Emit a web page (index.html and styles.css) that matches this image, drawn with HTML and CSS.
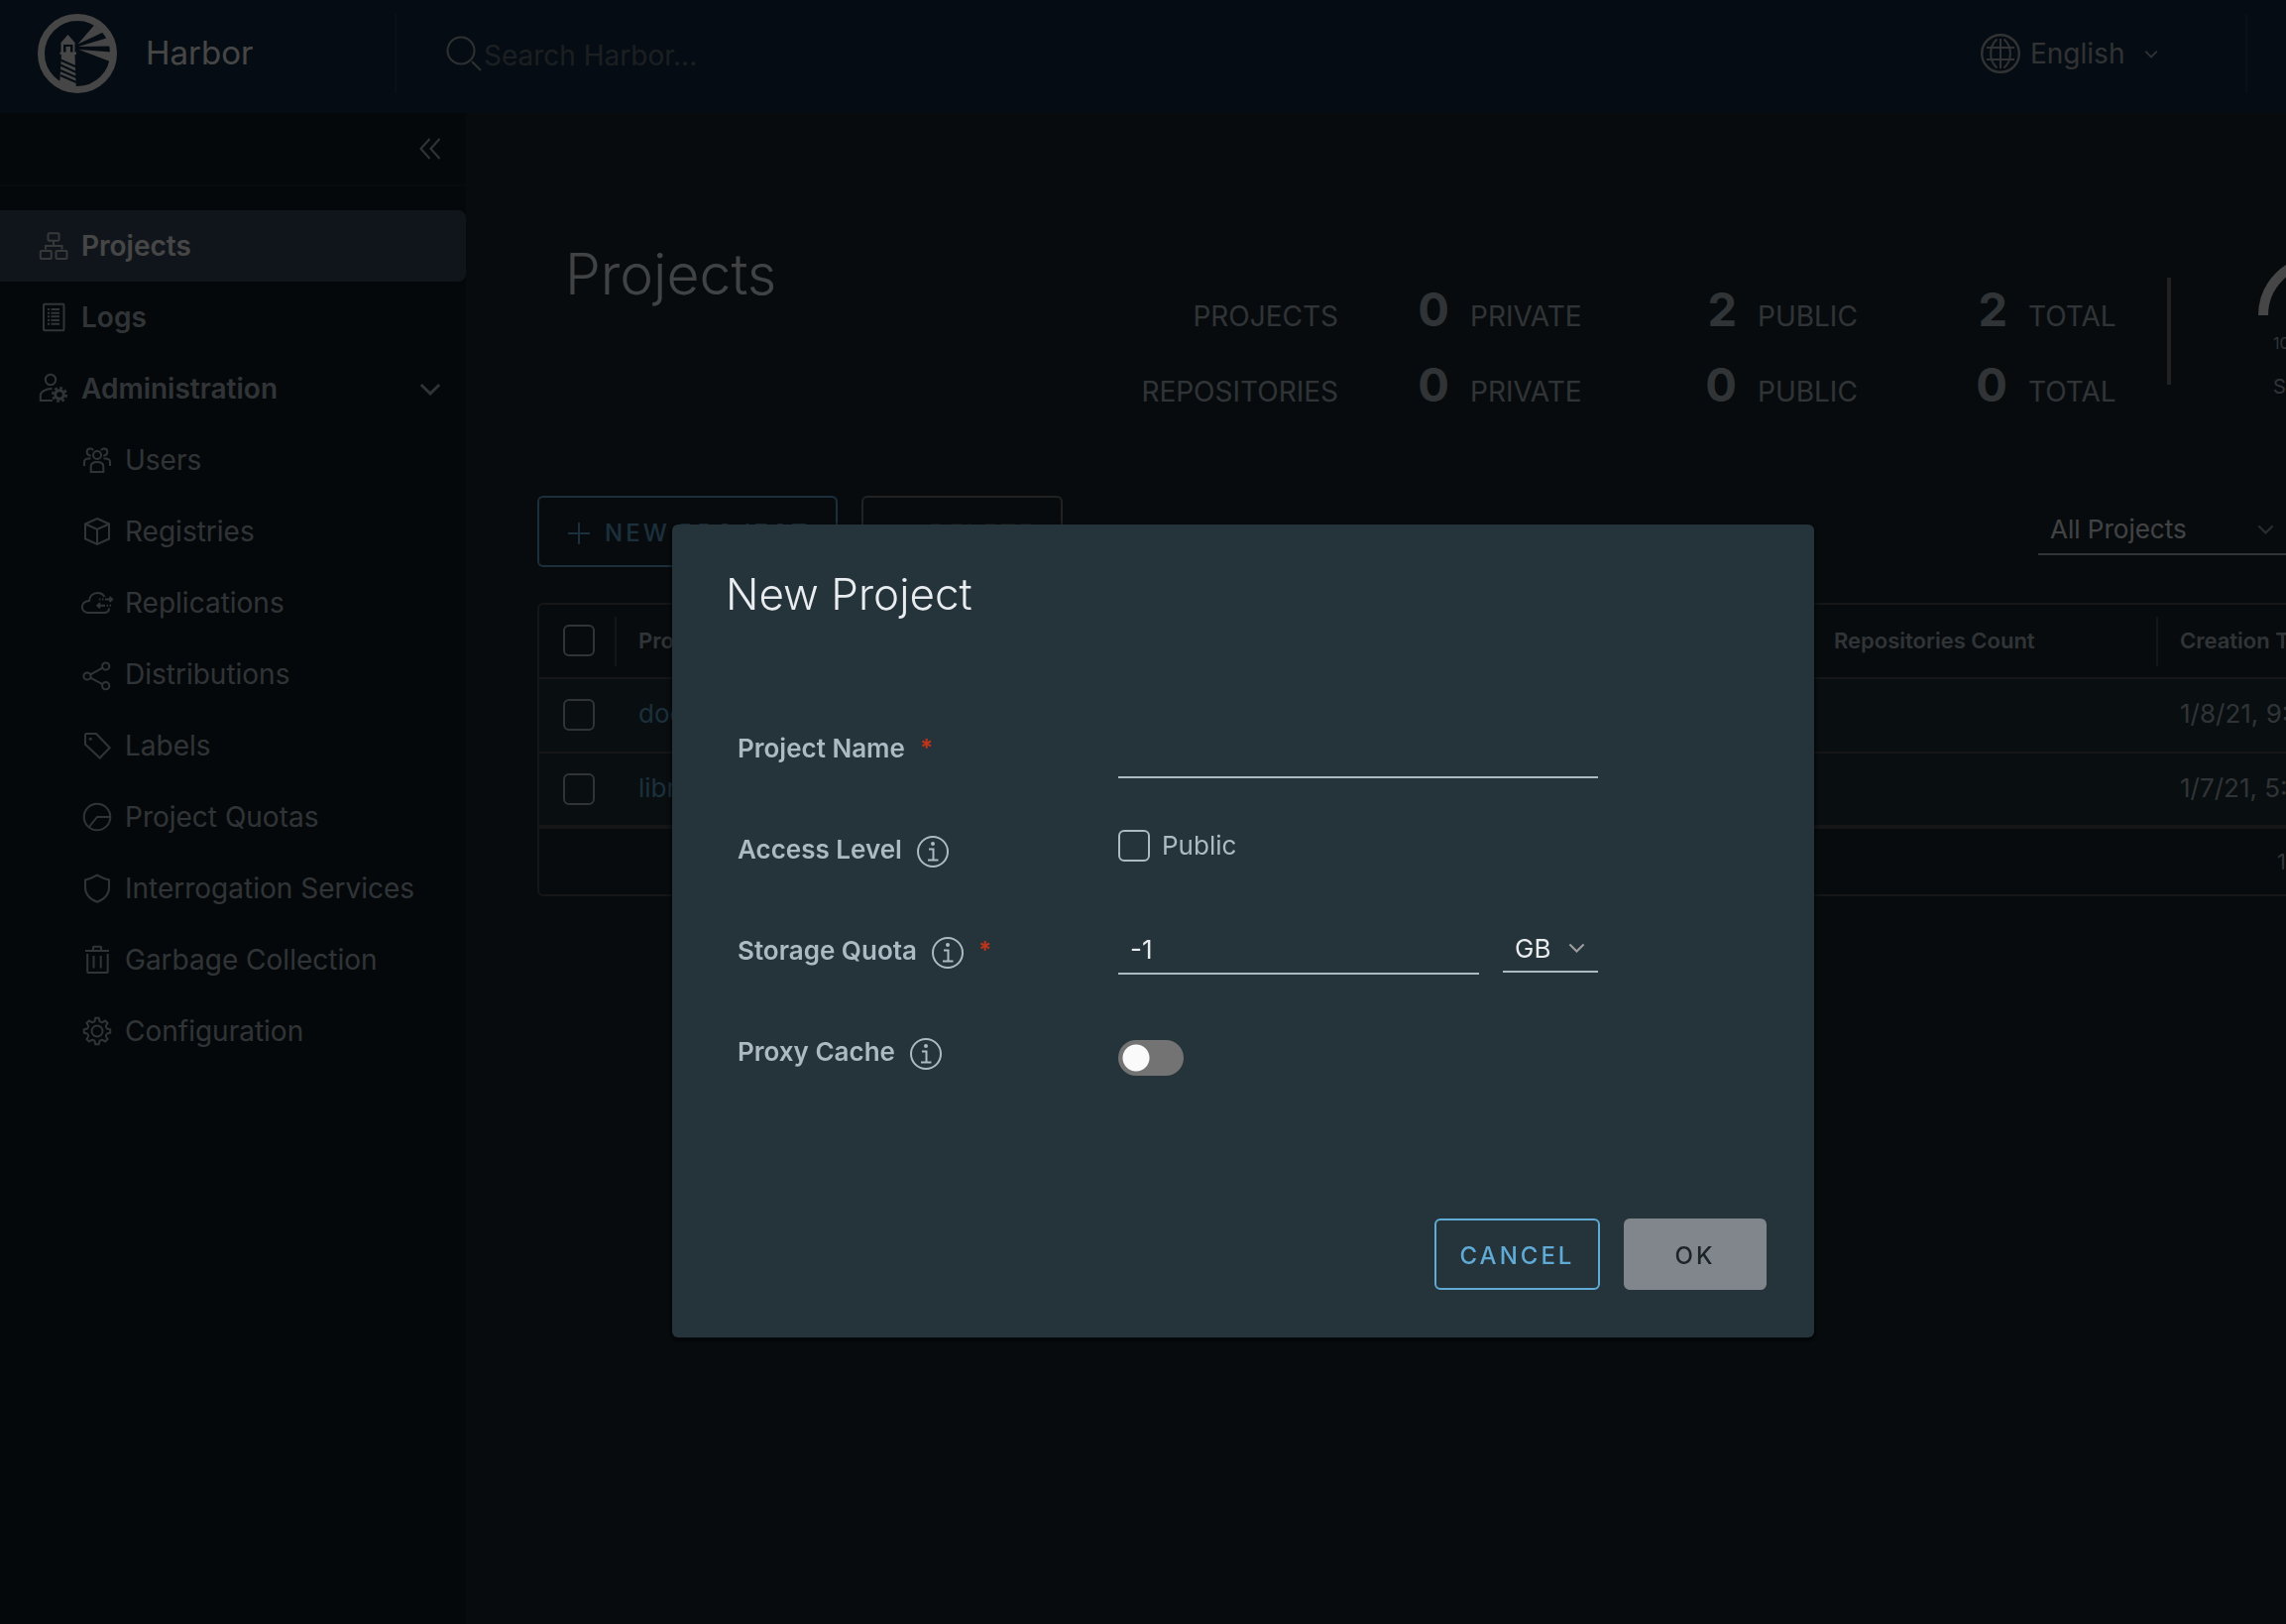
FILE: index.html
```html
<!DOCTYPE html>
<html lang="en">
<head>
<meta charset="utf-8">
<meta name="viewport" content="width=device-width, initial-scale=1">
<title>Harbor</title>
<link rel="stylesheet" href="styles.css">
</head>
<body>
<svg class="defs" aria-hidden="true">
  <symbol id="i-info" viewBox="0 0 32 32"><circle cx="16" cy="16" r="15" stroke-width="2"/><circle cx="16" cy="8" r="2" fill="currentColor" stroke="none"/><path d="M12 13.5h4.500v11M11 24.500h10.500" stroke-width="2"/></symbol>
  <symbol id="i-chevron" viewBox="0 0 24 14"><path d="M2 2l10 10L22 2"/></symbol>
  <path id="cog-tooth" d="M9.050-3.750Q9.600-2.400 11-2.200L13.200-1.700V1.700L11 2.200Q9.600 2.400 9.050 3.750"/>
</svg>

<header class="header">
  <a class="brand" href="#">
    <svg class="brand-logo" viewBox="0 0 80 80" aria-hidden="true">
      <circle cx="40" cy="40" r="36.500" fill="none" stroke="currentColor" stroke-width="7"/>
      <g fill="currentColor">
        <path d="M40.500 30.500L57 11.500 66 18.500zM41 33l28.500-8.500L74 32.500zM41.500 36L74 38.500 73 48z"/>
        <path d="M30.500 21L38 29.500H23zM23.500 29h14v10h-14zM22.500 38.500H39V41H22.500zM24 41h13.500L38.800 76 22 73z"/>
      </g>
      <path class="logo-cut" d="M26 31h9.500v7.500H33V33h-4.500v5.500H26z"/>
      <g class="logo-stripe"><path d="M23 46.500l16 7M23 51.500l16 7.500M23 57l16 7M23 62l16 7"/></g>
    </svg>
    <span class="brand-name">Harbor</span>
  </a>
  <form class="search" role="search">
    <svg class="search-icon" viewBox="0 0 36 36" aria-hidden="true"><circle cx="15" cy="15" r="13.500"/><path d="M26 26l9 9"/></svg>
    <input class="search-input" type="search" aria-label="Search Harbor" placeholder="Search Harbor...">
  </form>
  <button class="language" type="button">
    <svg class="globe" viewBox="0 0 40 40" aria-hidden="true"><circle cx="20" cy="20" r="18.800" stroke-width="2.400"/><path d="M20 5v30M6 14h28M6 26h28M16.500 5.500C8 13 8 27 16.500 34.500M23.500 5.500C32 13 32 27 23.500 34.500"/></svg>
    <span>English</span>
    <svg class="chevron chevron-xs" aria-hidden="true"><use href="#i-chevron"/></svg>
  </button>
</header>

<div class="layout">
  <nav class="sidebar" aria-label="Main">
    <div class="sidebar-top">
      <button class="collapse" type="button" aria-label="Collapse menu"><svg viewBox="0 0 22 22"><path d="M10.500 1l-9 10 9 10M20.500 1l-9 10 9 10"/></svg></button>
    </div>
    <ul class="nav">
      <li><a class="nav-link active" href="#"><svg viewBox="0 0 28 28"><rect x="8.500" y="1.300" width="11" height="7.500" rx="1"/><rect x=".8" y="19" width="11" height="8" rx="1"/><rect x="16.500" y="19" width="11" height="8" rx="1"/><path d="M14 9v5M6 17.500V14h16.500v3.500"/></svg>Projects</a></li>
      <li><a class="nav-link" href="#"><svg viewBox="0 0 28 28"><rect x="4" y=".8" width="20.500" height="26.500" rx="1"/><path d="M8 6h2M11.500 6H20M8 9.700h2M11.500 9.700H20M8 13.300h2M11.500 13.300H20M8 17h2M11.500 17H20M8 20.700h2M11.500 20.700H20"/></svg>Logs</a></li>
      <li>
        <a class="nav-link" href="#"><svg viewBox="0 0 28 28"><circle cx="11" cy="5" r="5.200"/><path d="M12.500 14C6 14 .8 17.500.8 20.500V26H13"/><circle cx="20" cy="20" r="4.300" stroke-width="3"/><circle cx="20" cy="20" r="6.800" stroke-width="2.500" stroke-dasharray="2.900 2.440"/></svg>Administration<svg class="chevron chevron-nav" aria-hidden="true"><use href="#i-chevron"/></svg></a>
        <ul class="nav nav-sub">
          <li><a class="nav-link" href="#"><svg viewBox="0 0 28 28"><circle cx="14" cy="9" r="4"/><path d="M7.700 26V20.500c0-3 2.500-4.500 6.300-4.500s6.300 1.500 6.300 4.500V26zM10 4.200C8.500 1.500 4 2 3.700 5.500c-.2 2.500 1.800 4.300 4 4M18 4.200c1.500-2.700 6-2.200 6.300 1.300.2 2.500-1.800 4.300-4 4M7.500 12.500C3 12 1 13.500 1 16v4M20.500 12.500C25 12 27 13.500 27 16v4"/></svg>Users</a></li>
          <li><a class="nav-link" href="#"><svg viewBox="0 0 28 28"><path d="M14 1l12 5.500v15L14 27 2 21.500v-15zM2 6.500L14 12l12-5.500M14 12v15"/></svg>Registries</a></li>
          <li><a class="nav-link" href="#"><svg viewBox="0 0 28 28"><path d="M21.500 8C20 5.500 17.500 4 14.500 4 9.500 4 6.500 7.500 6 12c-4 0-7.200 2.700-7.200 6.200C-1.200 22 2 24 5 24h15.500c3.500 0 5.500-1.500 5.500-4.500M22 10.500h7M26.500 8l2.700 2.500-2.700 2.500M16 10.500h1.500M19 10.500h1.500M22 16.800h-7.500M17 14.300l-2.700 2.500 2.700 2.500M23.500 16.800H25M26.500 16.800H28"/></svg>Replications</a></li>
          <li><a class="nav-link" href="#"><svg viewBox="0 0 28 28"><circle cx="4" cy="16" r="3.600"/><circle cx="22.700" cy="6" r="3.600"/><circle cx="22.700" cy="25.700" r="3.600"/><path d="M7.200 14.300L19.500 7.700M7.200 17.700l12.300 6.400"/></svg>Distributions</a></li>
          <li><a class="nav-link" href="#"><svg viewBox="0 0 28 28"><path d="M2 3q0-1 1-1h10L26.700 16.300 16.700 26.500 2 12.700z"/><circle cx="7.300" cy="7.300" r="1.500" fill="currentColor" stroke="none"/></svg>Labels</a></li>
          <li><a class="nav-link" href="#"><svg viewBox="0 0 28 28"><circle cx="14" cy="14" r="13.300"/><path d="M27 14H14L6 24"/></svg>Project Quotas</a></li>
          <li><a class="nav-link" href="#"><svg viewBox="0 0 28 28"><path d="M14 .7C10 3 6 4.800 2 5.500V13c0 7 4.500 12 12 14.700C21.500 25 26 20 26 13V5.500C22 4.800 18 3 14 .7z"/></svg>Interrogation Services</a></li>
          <li><a class="nav-link" href="#"><svg viewBox="0 0 28 28"><path d="M2 5h24M10 4V1.500q0-.8.8-.8h6.400q.8 0 .8.800V4M4.200 8v18q0 1 1 1h18.500q1 0 1-1V8M10.500 10v12.500M17.700 10v12.500"/></svg>Garbage Collection</a></li>
          <li><a class="nav-link" href="#"><svg viewBox="0 0 28 28"><circle cx="14" cy="14" r="5.500"/><g transform="translate(14 14)"><use href="#cog-tooth"/><use href="#cog-tooth" transform="rotate(45)"/><use href="#cog-tooth" transform="rotate(90)"/><use href="#cog-tooth" transform="rotate(135)"/><use href="#cog-tooth" transform="rotate(180)"/><use href="#cog-tooth" transform="rotate(225)"/><use href="#cog-tooth" transform="rotate(270)"/><use href="#cog-tooth" transform="rotate(315)"/></g></svg>Configuration</a></li>
        </ul>
      </li>
    </ul>
  </nav>

  <main class="main">
    <section class="page-head">
      <h1 class="page-title">Projects</h1>
      <div class="stats">
        <span class="stat-name">PROJECTS</span>
        <b class="stat-value">0</b><span class="stat-unit">PRIVATE</span>
        <b class="stat-value">2</b><span class="stat-unit">PUBLIC</span>
        <b class="stat-value">2</b><span class="stat-unit">TOTAL</span>
        <span class="stat-name">REPOSITORIES</span>
        <b class="stat-value">0</b><span class="stat-unit">PRIVATE</span>
        <b class="stat-value">0</b><span class="stat-unit">PUBLIC</span>
        <b class="stat-value">0</b><span class="stat-unit">TOTAL</span>
      </div>
      <div class="quota">
        <svg class="gauge" viewBox="0 0 120 60" aria-hidden="true"><path d="M5 60a55 55 0 0 1 110 0"/></svg>
        <span class="quota-value">10</span>
        <span class="quota-name">ST</span>
      </div>
    </section>

    <div class="toolbar">
      <button class="btn btn-outline" type="button"><svg class="btn-icon" viewBox="0 0 22 22" aria-hidden="true"><path d="M11 0v22M0 11h22"/></svg>NEW PROJECT</button>
      <button class="btn btn-disabled" type="button" disabled><svg class="btn-icon" viewBox="0 0 22 22" aria-hidden="true"><path d="M3 3l16 16M19 3L3 19"/></svg>DELETE</button>
      <div class="select filter">
        <select aria-label="Project type"><option>All Projects</option></select>
        <svg class="chevron chevron-sm" aria-hidden="true"><use href="#i-chevron"/></svg>
      </div>
    </div>

    <div class="datagrid">
      <table class="grid">
        <colgroup><col class="col-check"><col class="col-name"><col class="col-count"><col></colgroup>
        <thead>
          <tr><th><input class="checkbox" type="checkbox" aria-label="Select all"></th><th>Project Name</th><th>Repositories Count</th><th>Creation Time</th></tr>
        </thead>
        <tbody>
          <tr><td><input class="checkbox" type="checkbox" aria-label="Select docker"></td><td><a href="#">docker</a></td><td></td><td>1/8/21, 9:41 AM</td></tr>
          <tr><td><input class="checkbox" type="checkbox" aria-label="Select library"></td><td><a href="#">library</a></td><td></td><td>1/7/21, 5:20 PM</td></tr>
        </tbody>
      </table>
      <div class="grid-foot"><span class="range">1 - 2 of 2</span></div>
    </div>
  </main>
</div>

<div class="backdrop">
  <form class="modal" role="dialog" aria-labelledby="modal-title">
    <h2 class="modal-title" id="modal-title">New Project</h2>
    <div class="fields">
      <div class="field">
        <div class="field-label"><label for="name">Project Name</label><span class="required">*</span></div>
        <div class="field-control"><input class="text-input" id="name" type="text"></div>
      </div>
      <div class="field">
        <div class="field-label"><span>Access Level</span><svg class="info"><use href="#i-info"/></svg></div>
        <div class="field-control"><input class="checkbox" id="public" type="checkbox"><label class="check-label" for="public">Public</label></div>
      </div>
      <div class="field">
        <div class="field-label"><label for="quota">Storage Quota</label><svg class="info"><use href="#i-info"/></svg><span class="required">*</span></div>
        <div class="field-control with-unit">
          <input class="text-input" id="quota" type="text" value="-1">
          <div class="select unit"><select aria-label="Quota unit"><option>GB</option></select><svg class="chevron chevron-sm" aria-hidden="true"><use href="#i-chevron"/></svg></div>
        </div>
      </div>
      <div class="field">
        <div class="field-label"><label for="proxy">Proxy Cache</label><svg class="info"><use href="#i-info"/></svg></div>
        <div class="field-control"><input class="toggle" id="proxy" type="checkbox"></div>
      </div>
    </div>
    <div class="modal-actions">
      <button class="btn btn-outline" type="button">CANCEL</button>
      <button class="btn btn-solid" type="submit" disabled>OK</button>
    </div>
  </form>
</div>
</body>
</html>
```
FILE: styles.css
```css
:root {
  --text: #acbac3;
  --text-bright: #eaedf0;
  --muted: #9c9c9c;
  --accent: #60aad6;
  --line: #4a4f54;
  --header: #122e44;
  --page: #1b2a32;
}

* { box-sizing: border-box; }

body {
  margin: 0;
  min-height: 100vh;
  display: flex;
  flex-direction: column;
  overflow: hidden;
  background: var(--page);
  color: var(--text);
  font-family: Metropolis, Inter, "Liberation Sans", sans-serif;
  font-size: 26px;
  line-height: 36px;
}

svg { flex: none; fill: none; stroke: currentColor; overflow: visible; }
button, input, select { font: inherit; color: inherit; margin: 0; }
button { background: none; border: 0; padding: 0; }
a { color: inherit; text-decoration: none; }
.defs { position: absolute; width: 0; height: 0; }

/* Header */
.header {
  display: flex;
  align-items: flex-start;
  height: 114px;
  padding-top: 14px;
  background: var(--header);
  font-size: 28px;
}
.brand {
  display: flex;
  align-items: center;
  flex: 0 0 400px;
  height: 80px;
  padding-left: 38px;
  gap: 29px;
  border-right: 2px solid #223c54;
  color: #fafafa;
}
.brand-logo { width: 80px; height: 80px; stroke: none; }
.logo-cut { fill: var(--header); }
.logo-stripe { stroke: var(--header); stroke-width: 2; }
.brand-name { font-size: 33px; line-height: 40px; padding-bottom: 2px; }
.search { display: flex; align-items: center; flex: 1; height: 80px; padding-left: 50px; }
.search-icon { width: 36px; height: 36px; stroke-width: 2; color: #a8adb2; }
.search-input {
  flex: 1;
  padding: 4px 2px 0;
  background: none;
  border: 0;
  outline: 0;
  appearance: none;
}
.search-input::placeholder { color: #64707a; opacity: 1; }
.language {
  display: flex;
  align-items: center;
  flex: 0 0 310px;
  height: 80px;
  gap: 10px;
  margin-right: 39px;
  padding-left: 41px;
  border-right: 2px solid #2a3d50;
  color: #b0b4b8;
}
.globe { width: 40px; height: 40px; stroke-width: 2; }

.chevron { stroke-width: 3; }
.chevron-xs { width: 14px; height: 9px; margin-left: 10px; }
.chevron-sm { width: 17px; height: 10px; color: var(--muted); }
.chevron-nav { width: 22px; height: 13px; margin-left: auto; }

/* Layout */
.layout { display: flex; flex: 1; }
.sidebar { flex: 0 0 470px; background: #121e25; }
.sidebar-top {
  display: flex;
  justify-content: flex-end;
  height: 74px;
  padding: 25px 25px 0 0;
  border-bottom: 2px solid #1d2a32;
}
.collapse { width: 22px; height: 22px; }
.collapse svg { display: block; stroke-width: 2; }

.nav { list-style: none; margin: 24px 0 0; padding: 0; }
.nav-link {
  display: flex;
  align-items: center;
  gap: 14px;
  height: 72px;
  padding: 0 25px 0 40px;
  border-radius: 0 8px 8px 0;
  font-size: 28px;
  font-weight: 600;
}
.nav-link > svg:first-child { width: 28px; height: 28px; stroke-width: 2; }
.nav-link.active { background: #3a4b62; color: #fafafa; }
.nav-link.active > svg { color: #c4c8cc; }
.nav-sub { margin: 0; }
.nav-sub .nav-link { padding-left: 84px; font-weight: 400; }

/* Page */
.main { flex: 1; min-width: 0; padding: 128px 0 0 72px; overflow: hidden; }
.page-head { display: flex; align-items: flex-start; min-height: 258px; }
.page-title {
  flex: 0 0 560px;
  margin: 0;
  padding-left: 28px;
  color: #eaedf0;
  font-size: 57px;
  line-height: 70px;
  font-weight: 300;
}
.stats {
  display: grid;
  flex: none;
  grid-template-columns: 248px 112px 180px 110px 180px 93px 165px;
  grid-auto-rows: 76px;
  align-items: baseline;
  margin-top: 40px;
  font-size: 28px;
  position: relative;
}
.stats::after {
  content: "";
  position: absolute;
  top: -2px;
  right: 0;
  width: 4px;
  height: 108px;
  background: #7a7a7a;
}
.stat-name, .stat-value { text-align: right; }
.stat-value { font-size: 47px; line-height: 60px; }
.stat-unit { padding-left: 21px; }
.quota { display: flex; flex-direction: column; flex: 0 0 120px; margin: 16px 0 0 88px; }
.gauge { width: 120px; height: 60px; margin-bottom: 16px; stroke: #fafafa; stroke-width: 10; }
.quota span { padding-left: 15px; }
.quota-value { font-size: 16px; line-height: 24px; }
.quota-name { margin-top: 18px; font-size: 20px; line-height: 28px; }

/* Buttons */
.btn {
  display: flex;
  align-items: center;
  justify-content: center;
  height: 72px;
  padding-top: 4px;
  border: 2px solid;
  border-radius: 6px;
  font-size: 24px;
  font-weight: 500;
  letter-spacing: 3px;
  white-space: nowrap;
}
.btn-outline { border-color: var(--accent); color: var(--accent); }
.btn-disabled { border-color: #7a7a7a; color: #565656; }
.btn-solid { border-color: #80868b; background: #80868b; color: #1b2327; }
.btn-icon { width: 22px; height: 22px; margin-right: 15px; stroke-width: 2; }

.toolbar { display: flex; gap: 24px; margin-right: -120px; padding-right: 106px; }
.toolbar .btn { flex: 0 0 303px; padding-left: 29px; justify-content: flex-start; }
.toolbar .btn-disabled { flex-basis: 203px; }

/* Drop-downs */
.select {
  display: flex;
  align-items: center;
  position: relative;
  padding-bottom: 6px;
  border-bottom: 2px solid #acbac3;
  color: var(--text-bright);
}
.select select {
  width: 100%;
  height: 100%;
  padding: 0 12px;
  background: transparent;
  border: 0;
  outline: 0;
  appearance: none;
}
.select .chevron { position: absolute; right: 13px; pointer-events: none; }
.filter { flex: 0 0 264px; height: 44px; margin: 16px 0 0 auto; }
.filter .chevron { right: 26px; }

/* Data grid */
.datagrid {
  margin: 36px -120px 0 0;
  border: 2px solid var(--line);
  border-radius: 6px;
}
.grid { width: 100%; table-layout: fixed; border-collapse: separate; border-spacing: 0; }
.col-check { width: 76px; }
.col-name { width: 1206px; }
.col-count { width: 349px; }
.grid th, .grid td {
  height: 75px;
  padding: 0 0 1px 24px;
  border-bottom: 2px solid var(--line);
  text-align: left;
  white-space: nowrap;
}
.grid th { font-size: 22px; font-weight: 600; }
.grid th + th { background: linear-gradient(var(--line), var(--line)) no-repeat 0 12px / 2px 50px; }
.grid td { background: #21323a; }
.grid td + td { padding-bottom: 3px; }
.grid tr:last-child td { height: 76px; border-bottom-width: 4px; }
.grid a { color: var(--accent); }
.grid-foot { display: flex; justify-content: flex-end; align-items: center; height: 66px; font-size: 22px; }
.range { flex: 0 0 127px; white-space: nowrap; }

.checkbox {
  flex: none;
  display: block;
  width: 32px;
  height: 32px;
  appearance: none;
  border: 2px solid var(--text);
  border-radius: 6px;
}

/* Dialog */
.backdrop {
  position: fixed;
  inset: 0;
  display: flex;
  align-items: center;
  justify-content: center;
  padding: 240px 0 0 202px;
  background: rgba(0, 0, 0, .72);
}
.modal {
  width: 1152px;
  padding: 42px 48px 48px 54px;
  border-radius: 6px;
  background: #25333a;
  box-shadow: 0 2px 4px 2px rgba(0, 0, 0, .5);
}
.modal-title { margin: 0; color: var(--text-bright); font-size: 44px; line-height: 56px; font-weight: 300; }
.fields { margin-top: 106px; padding-left: 12px; }
.field { display: grid; grid-template-columns: 384px 484px; height: 102px; align-items: start; }
.field-label { display: flex; align-items: flex-start; gap: 15px; padding-top: 4px; font-weight: 600; }
.field-control { display: flex; align-items: flex-start; padding-top: 2px; }
.info { width: 32px; height: 32px; margin-top: 4px; }
.required { color: #c0341a; font-size: 24px; font-weight: 700; }
.text-input {
  flex: 1;
  min-width: 0;
  height: 50px;
  padding: 0 12px 6px;
  background: none;
  border: 0;
  border-bottom: 2px solid var(--text);
  outline: 0;
  color: var(--text-bright);
}
.with-unit .text-input { height: 44px; }
.check-label { padding-left: 12px; line-height: 32px; }
.unit { flex: 0 0 96px; height: 42px; margin-left: 24px; }
.toggle {
  width: 66px;
  height: 36px;
  margin-top: 8px;
  appearance: none;
  border-radius: 18px;
  background: radial-gradient(circle at 18px 18px, #fafafa 13px, transparent 14px) #737373;
}
.modal-actions { display: flex; justify-content: flex-end; gap: 24px; margin-top: 88px; }
.modal-actions .btn { width: 144px; }
.modal-actions .btn-outline { width: 167px; }
```
